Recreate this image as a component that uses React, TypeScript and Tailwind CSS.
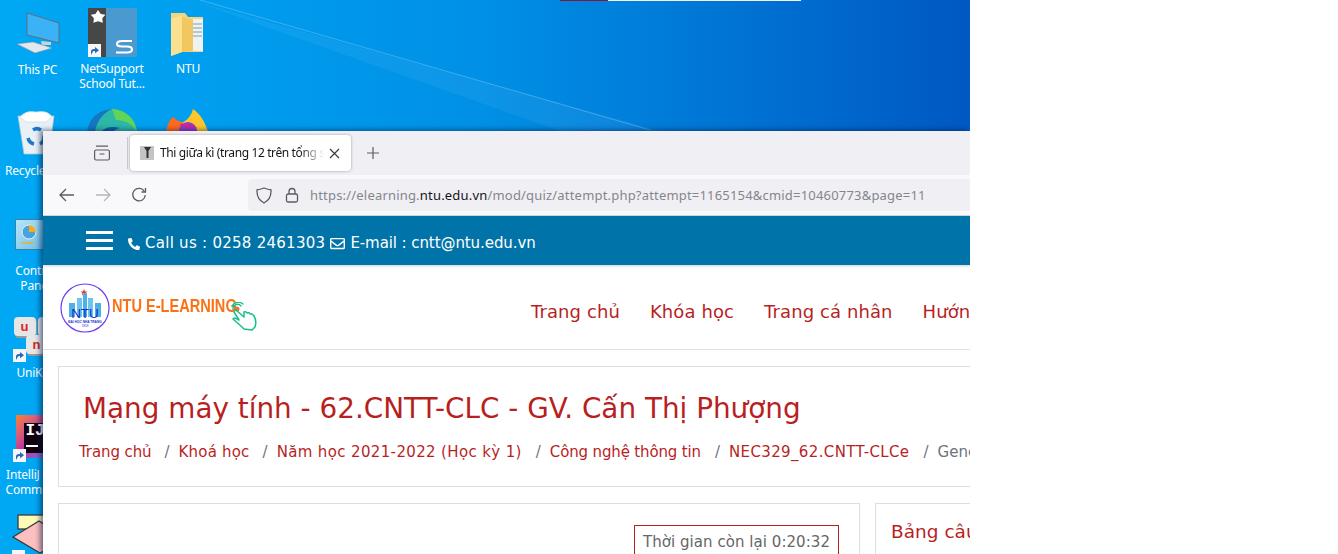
import React from "react";
import { FaPhoneAlt, FaRegEnvelope } from "react-icons/fa";

const shortcut = (
  <svg width="13" height="13" viewBox="0 0 13 13" className="absolute bottom-0 left-0">
    <rect width="13" height="13" fill="#f4f6f9" />
    <path d="M3 11 V7.5 Q3 5 6 5 H7 V3 L11 6.2 L7 9.2 V7 H6 Q4.6 7 4.4 8.5 Z" fill="#2b66b5" />
  </svg>
);

function DesktopIcon({ x, y, w, label, gap, children }: { x: number; y: number; w: number; label?: string; gap: string; children: React.ReactNode }) {
  return (
    <div className="absolute flex flex-col items-center" style={{ left: x, top: y, width: w }}>
      {children}
      {label && <span className={gap + " text-center text-xs leading-[15px] tracking-[-0.2px] text-white whitespace-pre"}>{label}</span>}
    </div>
  );
}

function Logo() {
  return (
    <div className="relative flex h-[50px] w-[200px] items-start">
      <svg width="50" height="50" viewBox="0 0 50 50" className="shrink-0">
        <circle cx="25" cy="25" r="24" fill="#fff" stroke="#6a3df0" strokeWidth="1.2" />
        <path d="M24 6 l1 2.4 2.4 .2 -1.9 1.5 .7 2.4 -2.2 -1.4 -2.1 1.4 .6 -2.4 -1.8 -1.5 2.4 -.2z" fill="#e0342c" />
        <rect x="9" y="20" width="6" height="14" fill="#4db0e8" />
        <rect x="17" y="15" width="5" height="19" fill="#6cc4f0" />
        <rect x="23" y="10" width="4" height="24" fill="#4db0e8" />
        <rect x="28" y="15" width="5" height="19" fill="#6cc4f0" />
        <rect x="35" y="20" width="6" height="14" fill="#4db0e8" />
        <text x="25" y="35" textAnchor="middle" fontSize="13.5" fontFamily="Liberation Sans" fill="#1230c8">NTU</text>
        <text x="25" y="39.5" textAnchor="middle" fontSize="3.2" fontWeight="700" fontFamily="Liberation Sans" fill="#1230c8">ĐẠI HỌC NHA TRANG</text>
        <text x="25" y="44" textAnchor="middle" fontSize="3" fontFamily="Liberation Sans" fill="#1230c8">1959</text>
      </svg>
      <span className="ml-[2px] mt-[13px] origin-left scale-x-[0.81] font-['Liberation_Sans',sans-serif] text-lg leading-5 font-bold text-[#f97316] whitespace-pre">NTU E-LEARNING</span>
      <svg width="30" height="30" viewBox="0 0 30 30" className="absolute left-[171px] top-[19px]" fill="none" stroke="#19bf8b" strokeWidth="1.5" strokeLinejoin="round" strokeLinecap="round">
        <circle cx="6" cy="7" r="2.5" fill="#e8743a" stroke="none" />
        <path d="M2 7 a4.5 4.5 0 0 1 8 -3 M1 4 a7 7 0 0 1 11 -2" strokeWidth="1.3" />
        <path d="M5 8 L13 15 L13 10 Q15 9 16 11 Q18 10 19 12 Q21 11 23 14 Q26 19 24 25 L21 28 L13 27 Q9 23 2 17 Q3 15 8 18 L3 10 Q4 7 5 8 Z" />
      </svg>
    </div>
  );
}

const crumbs = [
  { label: "Trang chủ", text: "tracking-[-0.1px]", slash: "ml-[13px] mr-[9px]" },
  { label: "Khoá học", text: "tracking-[0.2px]", slash: "ml-[13px] mr-[9px]" },
  { label: "Năm học 2021-2022 (Học kỳ 1)", text: "tracking-[0.36px]", slash: "ml-[14px] mr-[9px]" },
  { label: "Công nghệ thông tin", text: "tracking-[-0.15px]", slash: "ml-[14px] mr-[9px]" },
  { label: "NEC329_62.CNTT-CLCe", text: "tracking-[0.37px]", slash: "ml-[14px] mr-[9px]" },
];

export default function App() {
  return (
    <div className="h-[554px] w-[1338px] overflow-hidden bg-white font-['Noto_Sans',sans-serif]">
      <div className="relative h-[554px] w-[970px] overflow-hidden bg-gradient-to-r from-[#00a8f4] via-[#0090e6] to-[#0058c2]">
        <svg width="970" height="140" viewBox="0 0 970 140" className="absolute left-0 top-0">
          <path d="M190 0 L660 131 L560 131 Z" fill="#fff" opacity="0.05" />
          <path d="M200 0 L650 130" stroke="#fff" strokeWidth="1" opacity="0.22" />
        </svg>
        <div className="absolute left-[560px] top-0 flex h-px w-[241px]">
          <div className="w-[48px] bg-[#8c1040]" />
          <div className="flex-1 bg-[#f1f1f1]" />
        </div>

        <DesktopIcon x={7} y={12} w={61} label="This PC" gap="mt-[8px]">
          <svg width="46" height="42" viewBox="0 0 46 42">
            <path d="M12 1 L44 11 V31 L12 23 Z" fill="#3ab2f5" stroke="#5d6f80" />
            <path d="M26 29 L36 30 L36 33 L27 33 Z" fill="#c9d3da" />
            <path d="M2 32 L18 30 L37 36 L20 41 Z" fill="#e3e8ec" stroke="#8a98a3" strokeWidth="0.6" />
          </svg>
        </DesktopIcon>
        <DesktopIcon x={74} y={8} w={76} label={"NetSupport\nSchool Tut..."} gap="mt-[4px]">
          <div className="relative h-[49px] w-[49px] bg-[#4a9ad0]">
            <div className="absolute inset-y-0 left-0 w-[18px] bg-[#474747]" />
            <svg width="49" height="49" viewBox="0 0 49 49" className="absolute inset-0">
              <path d="M10 2 l2.8 4 4.6 .8 -3.1 3.4 .5 4.6 -4.8 -1.6 -4.6 1.6 .5 -4.6 -3.1 -3.4 4.6 -.8z" fill="#fff" />
              <path d="M44 33 H34 Q29 33 29 36 Q29 38.5 34 38.5 H39 Q44 38.5 44 41.5 Q44 44.5 39 44.5 H28" fill="none" stroke="#fff" strokeWidth="2.2" />
            </svg>
            {shortcut}
          </div>
        </DesktopIcon>
        <DesktopIcon x={150} y={12} w={76} label="NTU" gap="mt-[5px]">
          <svg width="36" height="44" viewBox="0 0 36 44">
            <path d="M1 1 H15 L18 5 H33 V40 H12 L1 44 Z" fill="#f7d47c" />
            <rect x="23" y="7" width="10" height="32" fill="#eef2f0" />
            <path d="M23 12 h9 M23 16 h9 M23 20 h9 M23 24 h9" stroke="#7ea0b5" strokeWidth="1" />
            <path d="M1 7 L12 3 V40 L1 44 Z" fill="#fbe08f" />
            <path d="M12 5 L23 8 V39 L12 40 Z" fill="#f2c75f" />
          </svg>
        </DesktopIcon>

        <DesktopIcon x={5} y={110} w={61} label="Recycle Bin" gap="mt-[7px]">
          <svg width="40" height="46" viewBox="0 0 40 46">
            <path d="M2 6 L38 6 L33 44 H8 Z" fill="#e9f1f7" stroke="#b6c5d0" strokeWidth="0.7" />
            <path d="M4 7 Q10 0 20 2 Q32 0 36 7 L30 12 H10 Z" fill="#fff" stroke="#cfd6dc" strokeWidth="0.7" />
            <path d="M17 20 a7 7 0 0 1 8 0 M12 28 a8 8 0 0 0 6 6 M24 34 a8 8 0 0 0 4 -8" fill="none" stroke="#1f78c8" strokeWidth="3.5" />
          </svg>
        </DesktopIcon>
        <svg width="52" height="50" viewBox="0 0 52 50" className="absolute left-[86px] top-[108px]">
          <circle cx="26" cy="26" r="25" fill="#2cb8a8" />
          <path d="M26 1 A25 25 0 0 1 51 26 Q46 12 30 12 Z" fill="#62d558" />
          <path d="M1 26 A25 25 0 0 1 26 1 Q10 8 8 30 Z" fill="#1577c4" />
          <path d="M5 40 Q14 14 34 20 Q20 22 22 50 H10 Z" fill="#0f5fa8" />
        </svg>
        <svg width="46" height="40" viewBox="0 0 46 40" className="absolute left-[165px] top-[109px]">
          <path d="M28 0 Q40 8 45 30 L8 40 Q14 14 20 12 Q26 8 28 0Z" fill="#ffc62a" />
          <path d="M1 22 Q4 9 9 8 Q10 12 18 13 L18 30 L3 30 Z" fill="#ff6a1f" />
          <circle cx="23" cy="22" r="9" fill="#8a3fd1" />
          <path d="M14 16 Q22 12 32 19 L22 20 Z" fill="#c02ba3" />
        </svg>

        <DesktopIcon x={5} y={219} w={61} label={"Control\nPanel"} gap="mt-[13px]">
          <div className="mr-[9px] h-[31px] w-[32px] border border-[#3d7fa8] bg-gradient-to-br from-[#b9e4f8] to-[#64bfe9] p-[4px]">
            <svg width="22" height="22" viewBox="0 0 22 22">
              <circle cx="9" cy="8" r="7" fill="#4aa3e0" stroke="#e7f2f9" />
              <path d="M9 1 A7 7 0 0 1 16 8 H9 Z" fill="#f1ae1f" />
              <path d="M1 19 H14" stroke="#f1ae1f" strokeWidth="1.4" />
            </svg>
          </div>
        </DesktopIcon>
        <DesktopIcon x={5} y={316} w={61} label="UniKey" gap="mt-[3px]">
          <div className="relative h-[46px] w-[46px]">
            <div className="absolute left-[1px] top-[1px] flex h-[19px] w-[22px] items-center justify-center rounded-sm bg-[#e6e6e6] font-['Liberation_Sans',sans-serif] text-[13px] leading-none font-bold text-[#d8232a] shadow-[1px_2px_0_#9a9a9a]">u</div>
            <div className="absolute left-[25px] top-[1px] h-[19px] w-[18px] rounded-sm bg-[#e6e6e6] shadow-[1px_2px_0_#9a9a9a]" />
            <div className="absolute left-[13px] top-[19px] flex h-[19px] w-[22px] items-center justify-center rounded-sm bg-[#e6e6e6] font-['Liberation_Sans',sans-serif] text-[13px] leading-none font-bold text-[#d8232a] shadow-[1px_2px_0_#9a9a9a]">n</div>
            {shortcut}
          </div>
        </DesktopIcon>
        <DesktopIcon x={7} y={415} w={61} label={"IntelliJ IDEA\nCommunity"} gap="mt-[5px]">
          <div className="relative mr-[4px] h-[47px] w-[46px]">
            <div className="absolute left-[3px] top-0 h-[43px] w-[43px] bg-gradient-to-br from-[#fc801d] via-[#b82ca0] to-[#087cfa] pl-[8px] pt-[8px] pr-[3px] pb-[5px]">
              <div className="flex h-full w-full flex-col bg-[#12020f] pl-[2px] pt-[1px] font-['Liberation_Mono',monospace] text-base leading-[14px] font-bold text-white">
                IJ
                <div className="mt-[7px] h-[2px] w-[12px] bg-white" />
              </div>
            </div>
            {shortcut}
          </div>
        </DesktopIcon>
        <svg width="40" height="48" viewBox="0 0 40 48" className="absolute left-[12px] top-[514px]">
          <rect x="6" y="1" width="30" height="14" fill="#fdfbb7" stroke="#3a3a3a" strokeWidth="1.3" />
          <path d="M1 23 L27 7 L40 15 V32 L28 39 Z" fill="#fcc0c0" stroke="#3a3a3a" strokeWidth="1.3" />
          <rect x="0" y="36" width="13" height="12" fill="#f4f6f9" />
        </svg>

        {/* browser window */}
        <div className="absolute left-[43px] top-[131px] flex h-[423px] w-[927px] flex-col overflow-hidden bg-white shadow-[-3px_-1px_5px_rgba(0,20,60,0.55)]">
          <div className="flex h-[44px] shrink-0 bg-[#f0f0f4]">
            <div className="flex w-[84px] items-center justify-end pr-[17px]">
              <svg width="16" height="16" viewBox="0 0 16 16" fill="none" stroke="#5b5b66" strokeWidth="1.2">
                <rect x="0.6" y="5" width="14.8" height="10" rx="1.5" />
                <path d="M2.5 1.2 H13.5 M6 9 H10" strokeLinecap="round" />
              </svg>
            </div>
            <div className="my-auto h-[32px] w-px bg-[#c9c9d0]" />
            <div className="ml-[2px] mt-[4px] flex h-[36px] w-[221px] items-center rounded-[4px] bg-white pl-[9px] pr-[11px] shadow-[0_0_3px_rgba(0,0,0,0.35)]">
              <svg width="16" height="16" viewBox="0 0 16 16" className="shrink-0">
                <rect x="1" y="1" width="14" height="14" rx="1" fill="#c4c4c4" />
                <path d="M5 2 H12 L9.5 6 V13 H7.5 V6 Z" fill="#333" />
              </svg>
              <span className="ml-[5px] w-[164px] overflow-hidden text-xs leading-4 tracking-[-0.38px] whitespace-nowrap text-[#15141a] [mask-image:linear-gradient(to_right,black_85%,transparent)]">Thi giữa kì (trang 12 trên tổng số 40)</span>
              <svg width="11" height="11" viewBox="0 0 11 11" stroke="#3a3a44" strokeWidth="1.2" className="ml-auto shrink-0">
                <path d="M1 1 L10 10 M10 1 L1 10" />
              </svg>
            </div>
            <svg width="12" height="12" viewBox="0 0 12 12" stroke="#5b5b66" strokeWidth="1.2" className="my-auto ml-[16px]">
              <path d="M6 0 V12 M0 6 H12" />
            </svg>
          </div>

          <div className="flex h-[41px] shrink-0 items-center border-b border-[#d4d4d8] bg-[#f9f9fb]">
            <div className="flex w-[205px] items-center pl-[16px]">
              <svg width="16" height="14" viewBox="0 0 16 14" fill="none" stroke="#5b5b66" strokeWidth="1.3">
                <path d="M15 7 H1.5 M7 1 L1 7 L7 13" />
              </svg>
              <svg width="16" height="14" viewBox="0 0 16 14" fill="none" stroke="#b6b6bc" strokeWidth="1.3" className="ml-[20px]">
                <path d="M1 7 H14.5 M9 1 L15 7 L9 13" />
              </svg>
              <svg width="16" height="16" viewBox="0 0 16 16" fill="none" stroke="#5b5b66" strokeWidth="1.3" className="ml-[20px]">
                <path d="M13.5 4.5 A6.3 6.3 0 1 0 14.3 8" />
                <path d="M14.5 1 V5 H10.5" />
              </svg>
            </div>
            <div className="flex h-[32px] flex-1 items-center rounded-l-[4px] bg-[#f0f0f4] pl-[8px]">
              <svg width="16" height="17" viewBox="0 0 16 17" fill="none" stroke="#5b5b66" strokeWidth="1.3">
                <path d="M8 1 Q12 2.5 15 2.8 Q15.5 12 8 16 Q0.5 12 1 2.8 Q4 2.5 8 1 Z" />
              </svg>
              <svg width="14" height="16" viewBox="0 0 14 16" fill="none" stroke="#5b5b66" strokeWidth="1.3" className="ml-[13px]">
                <rect x="1.5" y="7" width="11" height="8" rx="1.5" />
                <path d="M4 7 V4.5 a3 3 0 0 1 6 0 V7" />
              </svg>
              <span className="ml-[11px] text-[13px] leading-4 tracking-[0.19px] whitespace-nowrap text-[#85858c]">
                https://elearning.<span className="text-[#15141a]">ntu.edu.vn</span>/mod/quiz/attempt.php?attempt=1165154&amp;cmid=10460773&amp;page=11
              </span>
            </div>
          </div>

          <div className="flex-1 overflow-hidden font-['DejaVu_Sans',sans-serif]">
            <div className="flex h-[49px] items-center bg-[#0073a8] pl-[43px] pt-[6px] text-[15px] text-white shadow-[0_1px_3px_rgba(0,0,0,0.2)]">
              <div className="mb-[6px] flex h-[19px] w-[27px] flex-col justify-between">
                <div className="h-[3px] bg-white" />
                <div className="h-[3px] bg-white" />
                <div className="h-[3px] bg-white" />
              </div>
              <FaPhoneAlt className="ml-[15px] size-[12px]" />
              <span className="ml-[5px] tracking-[0.27px] whitespace-pre">Call us : 0258 2461303</span>
              <FaRegEnvelope className="ml-[5px] size-[15px]" />
              <span className="ml-[5px] tracking-[-0.08px] whitespace-pre">E-mail : cntt@ntu.edu.vn</span>
            </div>

            <div className="flex h-[85px] items-start border-b border-[#e2e2e2] pl-[17px]">
              <div className="mt-[18px] w-[471px] shrink-0">
                <Logo />
              </div>
              <nav className="mt-[36px] flex gap-[30px] text-lg leading-[22px] tracking-[0.1px] whitespace-nowrap text-[#b81f1f]">
                <span>Trang chủ</span>
                <span>Khóa học</span>
                <span>Trang cá nhân</span>
                <span>Hướng dẫn</span>
              </nav>
            </div>

            <div className="ml-[15px] mt-[16px] h-[121px] w-[1000px] border border-[#dedede] pl-[20px]">
              <h1 className="mt-[24px] pl-[4px] text-[27.85px] leading-[36px] font-normal whitespace-nowrap text-[#b81f1f]">Mạng máy tính - 62.CNTT-CLC - GV. Cấn Thị Phượng</h1>
              <div className="mt-[15px] flex text-[15px] leading-5 whitespace-nowrap text-[#b81f1f]">
                {crumbs.map((c) => (
                  <React.Fragment key={c.label}>
                    <span className={c.text}>{c.label}</span>
                    <span className={c.slash + " text-[#6c757d]"}>/</span>
                  </React.Fragment>
                ))}
                <span className="text-[#6c757d]">General</span>
              </div>
            </div>

            <div className="ml-[15px] mt-[16px] flex gap-[15px]">
              <div className="flex h-[60px] w-[802px] shrink-0 justify-end border border-[#dedede] pt-[21px] pr-[20px]">
                <div className="h-[40px] w-[205px] border border-[#b81f1f] pt-[6px] text-center text-[15px] leading-5 tracking-[0.05px] whitespace-nowrap text-[#666]">Thời gian còn lại 0:20:32</div>
              </div>
              <div className="h-[60px] w-[300px] shrink-0 border border-[#dedede] pl-[15px] pt-[16px] text-[18.5px] leading-6 whitespace-nowrap text-[#b81f1f]">Bảng câu hỏi</div>
            </div>
          </div>
        </div>
      </div>
    </div>
  );
}
